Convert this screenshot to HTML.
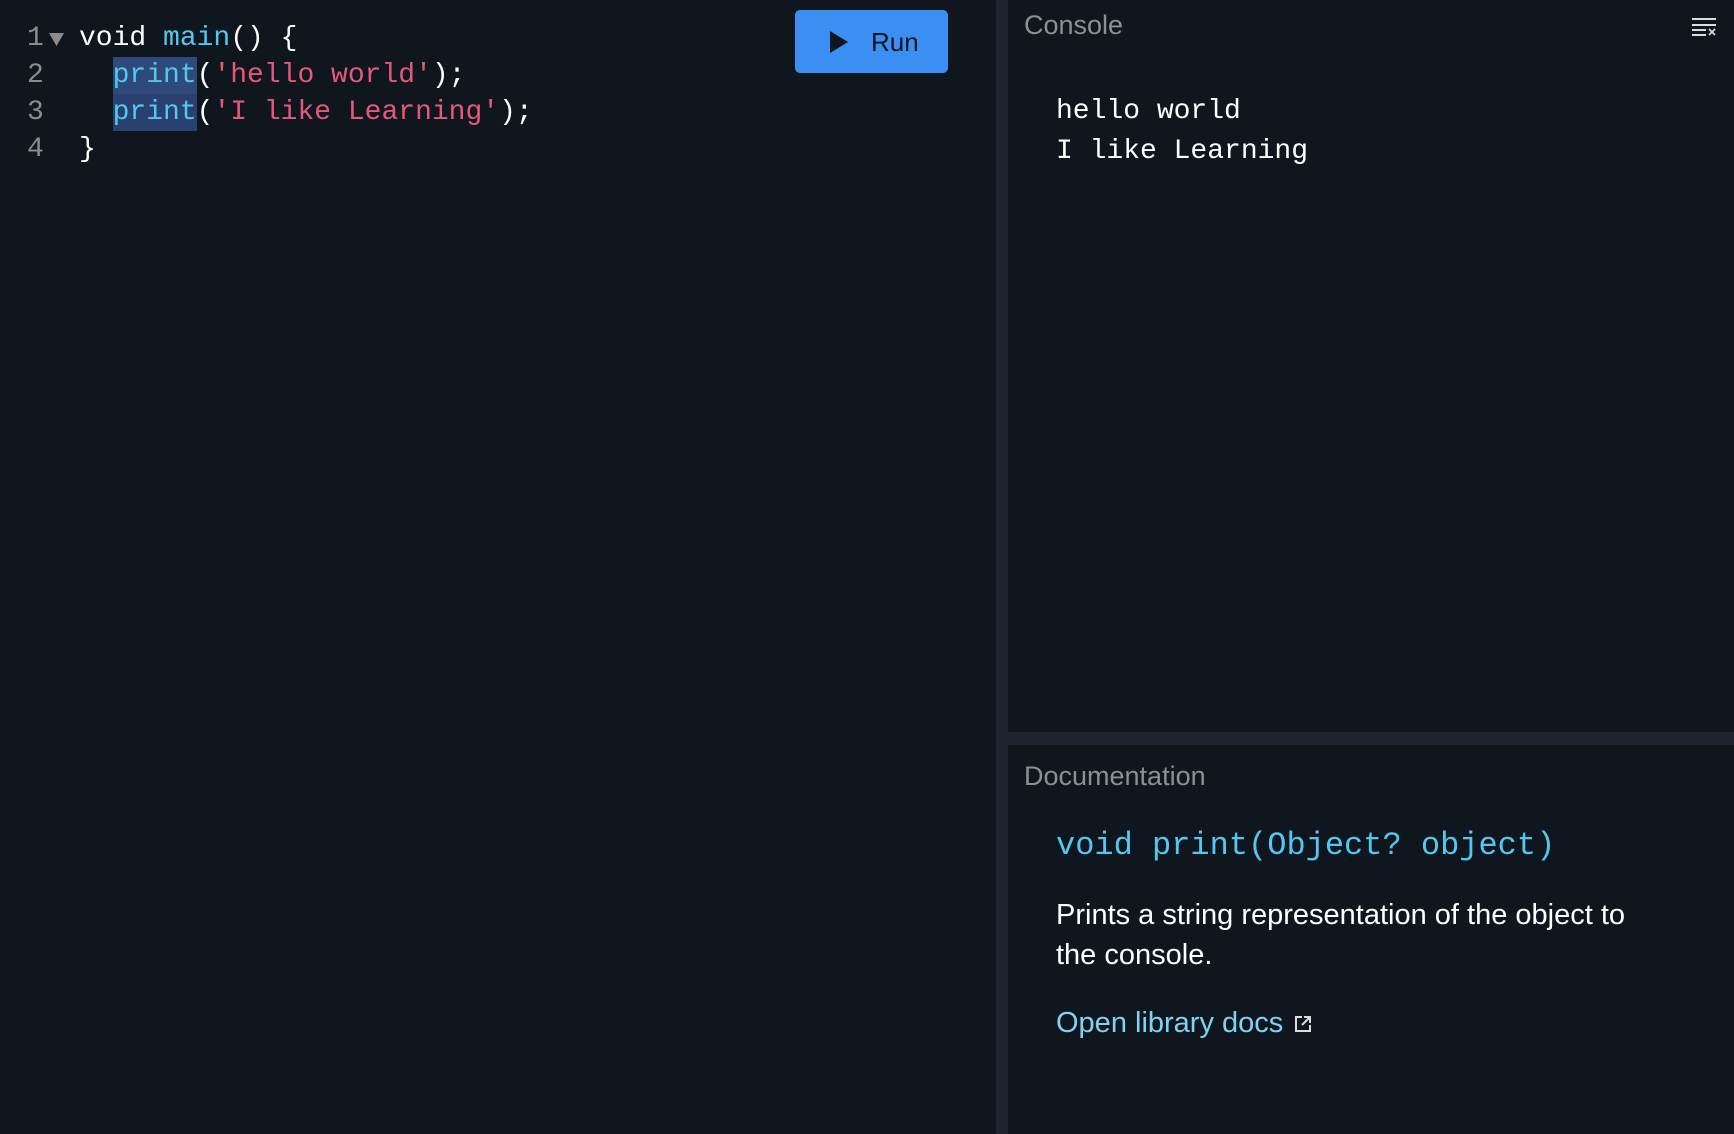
<!DOCTYPE html>
<html><head><meta charset="utf-8"><style>
*{margin:0;padding:0;box-sizing:border-box}
body{width:1734px;height:1134px;background:#10161e;overflow:hidden;position:relative;font-family:"Liberation Sans",sans-serif;color:#fff}
.mono{font-family:"Liberation Mono",monospace}
.vdiv{position:absolute;left:996px;top:0;width:12px;height:1134px;background:#1c2530}
.hdiv{position:absolute;left:1008px;top:732px;width:726px;height:13px;background:#1c2530}
.code{position:absolute;left:0;top:20px;font-size:28px;line-height:37px;white-space:pre}
.ln{position:absolute;left:27px;color:#8c8c8c}
.l{position:absolute;left:79px}
.k{color:#52c8f0}.s{color:#e5587a}
.hl{background:#2f4a7a;display:inline-block;height:37px}
.run{position:absolute;left:795px;top:10px;width:153px;height:63px;background:#3b8ff3;border-radius:5px;color:#10161e;font-size:26px}
.run svg{position:absolute;left:35px;top:21px}
.run span{position:absolute;left:76px;top:17px}
.lbl{position:absolute;left:1024px;font-size:27px;color:#8f8f8f}
.out{position:absolute;left:1056px;top:92px;font-size:28px;line-height:40px;white-space:pre}
</style></head><body>
<div class="vdiv"></div><div class="hdiv"></div>
<div class="code mono">
<div class="ln" style="top:0">1</div><svg style="position:absolute;left:49px;top:13px" width="15" height="13"><path d="M0 0H15L7.5 13Z" fill="#8c8c8c"/></svg><div class="l" style="top:0">void <span class="k">main</span>() {</div>
<div class="ln" style="top:37px">2</div><div class="l" style="top:37px">  <span class="hl k">print</span>(<span class="s">'hello world'</span>);</div>
<div class="ln" style="top:74px">3</div><div class="l" style="top:74px">  <span class="hl k" style="background:#2a4170">print</span>(<span class="s">'I like Learning'</span>);</div>
<div class="ln" style="top:111px">4</div><div class="l" style="top:111px">}</div>
</div>
<div class="run"><svg width="18" height="22"><path d="M0 0L18 11L0 22Z" fill="#10161e"/></svg><span>Run</span></div>
<div class="lbl" style="top:10px">Console</div>
<svg style="position:absolute;left:1692px;top:17px" width="25" height="19"><g stroke="#ddd" stroke-width="2"><path d="M0 2H24M0 8H24M0 13H14M0 18H14"/><path d="M17 12L23 18M23 12L17 18" stroke-width="1.6"/></g></svg>
<div class="out mono">hello world
I like Learning</div>
<div class="lbl" style="top:761px">Documentation</div>
<div class="mono" style="position:absolute;left:1056px;top:827px;font-size:32px;color:#52c8f0">void print(Object? object)</div>
<div style="position:absolute;left:1056px;top:895px;width:600px;font-size:29px;line-height:40px">Prints a string representation of the object to the console.</div>
<div style="position:absolute;left:1056px;top:1007px;font-size:29px;color:#7fd3ef">Open library docs</div>
<svg style="position:absolute;left:1294px;top:1015px" width="18" height="18"><g fill="none" stroke="#ddd" stroke-width="2"><path d="M8 2H2V16H16V10"/><path d="M10 2H16V8M16 2L8 10"/></g></svg>
</body></html>
